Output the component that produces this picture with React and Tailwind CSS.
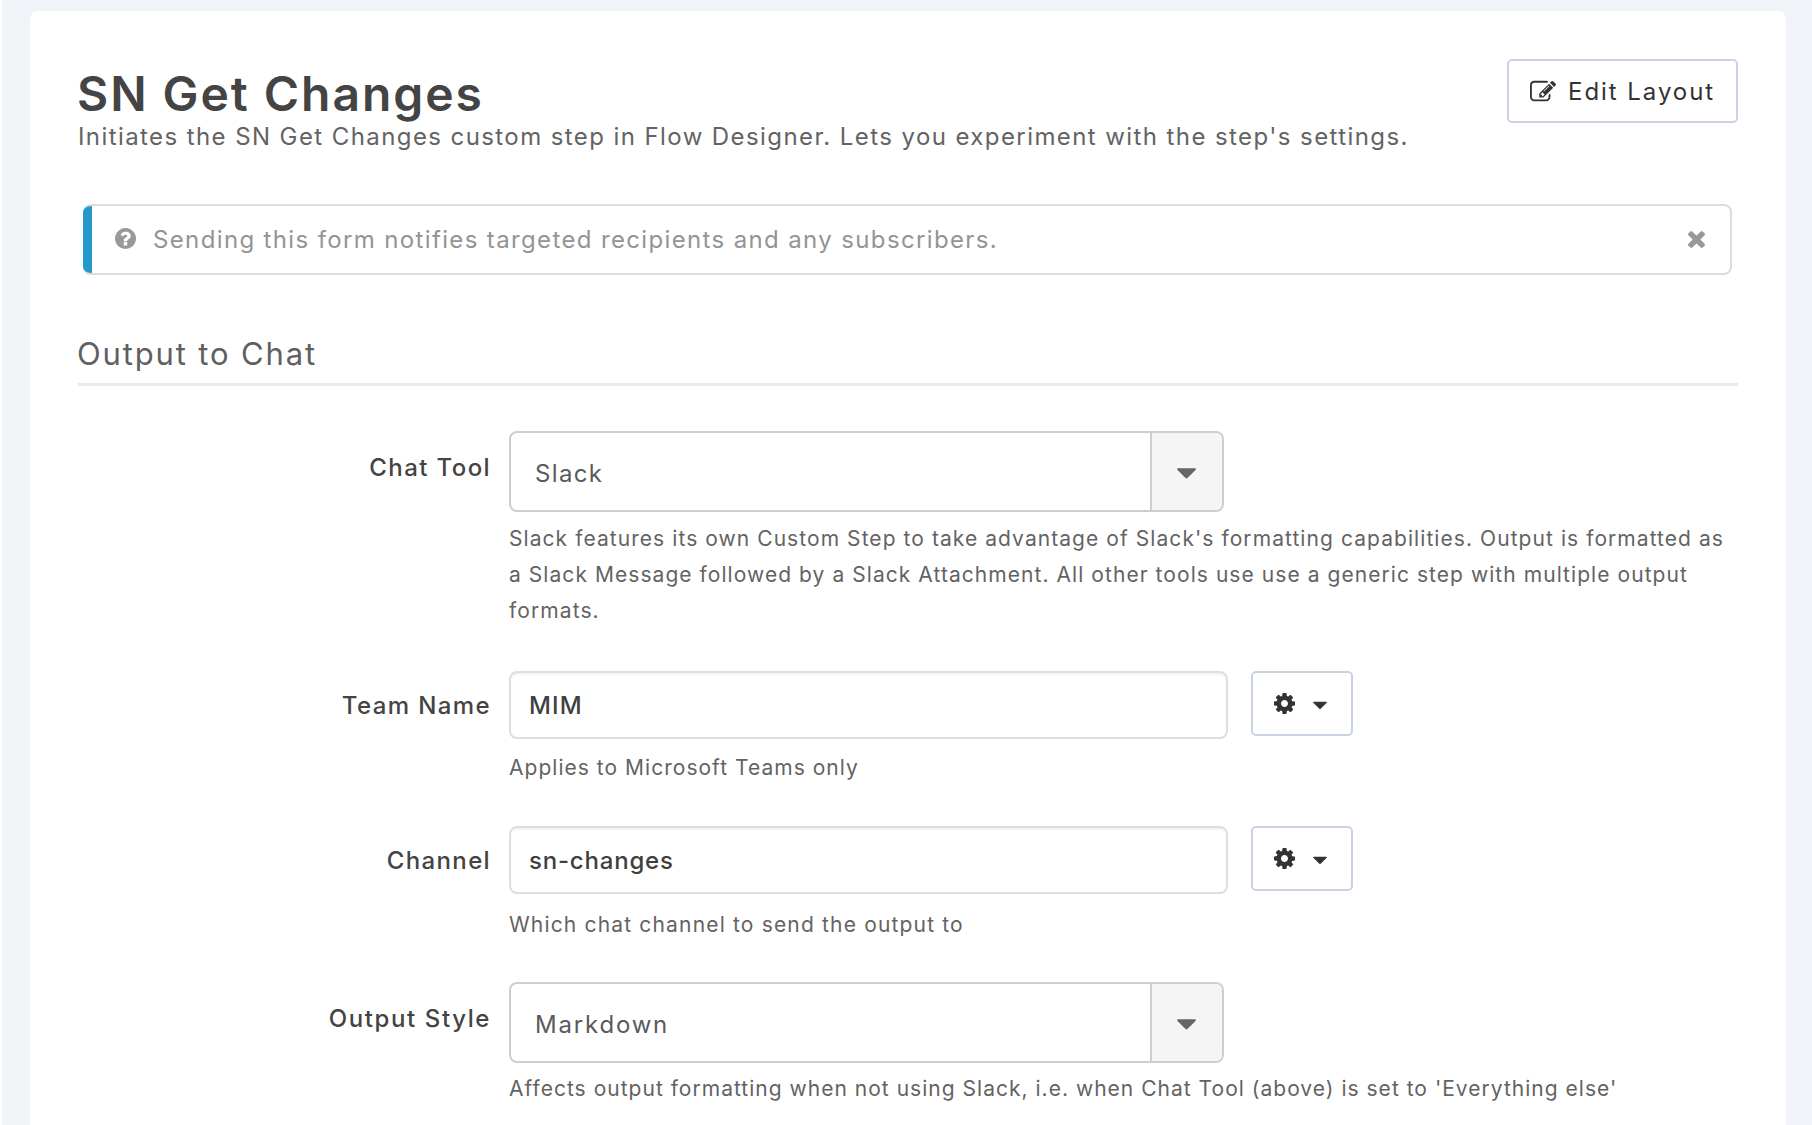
import React from "react";

function PencilSquareIcon({ className }) {
  return (
    <svg viewBox="0 0 1792 1792" fill="currentColor" className={className}>
      <path d="M888 1184l116-116-152-152-116 116v56h96v96h56zm440-720q-16-16-33 1l-350 350q-17 17-1 33t33-1l350-350q17-17 1-33zm80 594v190q0 119-84.500 203.500t-203.500 84.500h-832q-119 0-203.500-84.500t-84.500-203.500v-832q0-119 84.500-203.500t203.500-84.500h832q63 0 117 25 15 7 18 23 3 17-9 29l-49 49q-14 14-32 8-23-6-45-6h-832q-66 0-113 47t-47 113v832q0 66 47 113t113 47h832q66 0 113-47t47-113v-126q0-13 9-22l64-64q15-15 35-7t20 29zm-96-738l288 288-672 672h-288v-288zm444 132l-92 92-288-288 92-92q28-28 68-28t68 28l152 152q28 28 28 68t-28 68z" />
    </svg>
  );
}

function HelpIcon({ className }) {
  return (
    <svg viewBox="0 0 1536 1536" fill="currentColor" className={className}>
      <path d="M896 1248v-192q0-14-9-23t-23-9H672q-14 0-23 9t-9 23v192q0 14 9 23t23 9h192q14 0 23-9t9-23zm256-672q0-88-55.500-163T958 297t-170-41q-243 0-371 213-15 24 8 42l132 100q7 6 19 6 16 0 25-12 53-68 86-92 34-24 86-24 48 0 85.500 26t37.500 59q0 38-20 61t-68 45q-63 28-115.500 86.500T640 892v36q0 14 9 23t23 9h192q14 0 23-9t9-23q0-19 21.500-49.500T972 829q32-18 49-28.500t46-35 44.500-48 28-60.500 12.500-81zm384 192q0 209-103 385.500T1153.500 1433 768 1536t-385.500-103T103 1153.500 0 768t103-385.500T382.500 103 768 0t385.500 103T1433 382.500 1536 768z" />
    </svg>
  );
}

function CloseIcon({ className }) {
  return (
    <svg viewBox="110 302 1188 1188" fill="currentColor" className={className}>
      <path d="M1298 1322q0 40-28 68l-136 136q-28 28-68 28t-68-28l-294-294-294 294q-28 28-68 28t-68-28l-136-136q-28-28-28-68t28-68l294-294-294-294q-28-28-28-68t28-68l136-136q28-28 68-28t68 28l294 294 294-294q28-28 68-28t68 28l136 136q28 28 28 68t-28 68l-294 294 294 294q28 28 28 68z" transform="translate(0 -64)" />
    </svg>
  );
}

function GearIcon({ className }) {
  return (
    <svg viewBox="0 0 1536 1536" fill="currentColor" className={className}>
      <path d="M1024 768q0-106-75-181t-181-75-181 75-75 181 75 181 181 75 181-75 75-181zm512-109v222q0 12-8 23t-20 13l-185 28q-19 54-39 91 35 50 107 138 10 12 10 25t-9 23q-27 37-99 108t-94 71q-12 0-26-9l-138-108q-44 23-91 38-16 136-29 186-7 28-36 28H657q-14 0-24.500-8.500T621 1506l-28-184q-49-16-90-37l-141 107q-10 9-25 9-14 0-25-11-126-114-165-168-7-10-7-23 0-12 8-23 15-21 51-66.500t54-70.500q-27-50-41-99L29 913q-13-2-21-12.500T0 877V655q0-12 8-23t19-13l186-28q14-46 39-92-40-57-107-138-10-12-10-24 0-10 9-23 26-36 98.500-107.500T337 135q13 0 26 10l138 107q44-23 91-38 16-136 29-186 7-28 36-28h222q14 0 24.500 8.500T915 30l28 184q49 16 90 37l142-107q9-9 24-9 13 0 25 10 129 119 165 170 7 8 7 22 0 12-8 23-15 21-51 66.500t-54 70.500q26 50 41 98l183 28q13 2 21 12.500t8 23.500z" />
    </svg>
  );
}

function Caret({ className }) {
  return (
    <svg viewBox="0 0 20 11" fill="currentColor" className={className}>
      <path d="M1.200 0h17.600q1.800.3.700 1.700L11 10.300q-1 .9-2 0L.5 1.700Q-.6.3 1.200 0z" />
    </svg>
  );
}

function Row({ label, labelClass, className, children }) {
  return (
    <div className={`grid grid-cols-[413px_1fr] gap-x-[18px] ${className}`}>
      <label className={`text-right text-[24px] leading-6 font-[450] text-[#444] ${labelClass}`}>{label}</label>
      <div>{children}</div>
    </div>
  );
}

function SelectBox({ children, textClass }) {
  return (
    <div className="flex h-[81px] w-[715px] overflow-hidden rounded-lg border-2 border-[#cecece]">
      <div className={`flex flex-1 items-center pl-[24px] pt-[4px] text-[24px] text-[#5a5a5a] ${textClass}`}>{children}</div>
      <div className="flex w-[72px] items-center justify-center border-l-2 border-[#cecece] bg-[#f5f5f5]">
        <Caret className="mt-[3px] mr-px h-[11px] w-[19px] text-[#666]" />
      </div>
    </div>
  );
}

function TextField({ value, textClass }) {
  return (
    <div className="flex items-start gap-[23px]">
      <div className={`flex h-[68px] w-[719px] items-center rounded-lg border-2 border-[#dedede] pt-[2px] pl-[18px] text-[24px] font-[450] text-[#3f3f3f] shadow-[inset_0_2px_2px_rgba(0,0,0,0.05)] ${textClass}`}>
        {value}
      </div>
      <button className="flex h-[65px] w-[102px] items-center rounded-[5px] border-2 border-[#c9d3e5] pl-[21px] text-[#333]">
        <GearIcon className="h-[21px] w-[21px]" />
        <Caret className="mt-1 ml-[18px] h-[9px] w-[14px]" />
      </button>
    </div>
  );
}

function Help({ className, children }) {
  return <p className={`text-[21px] leading-9 whitespace-nowrap text-[#636363] ${className}`}>{children}</p>;
}

export default function App() {
  return (
    <div className="h-[1125px] overflow-hidden border-l-2 border-white bg-[#f0f4f8] pt-[11px] pl-[28px] font-[Inter,sans-serif]">
      <main className="h-[1200px] w-[1756px] rounded-t-lg bg-white px-12 pt-12">
        <header className="flex h-[95px] items-start justify-between">
          <div className="pt-[11px]">
            <h1 className="-ml-px text-[48px] leading-[48px] font-semibold tracking-[1.95px] text-[#444]">SN Get Changes</h1>
            <p className="pt-px text-[24px] leading-9 tracking-[1.41px] whitespace-nowrap text-[#636363]">
              Initiates the SN Get Changes custom step in Flow Designer. Lets you experiment with the step's settings.
            </p>
          </div>
          <button className="flex h-[64px] w-[231px] items-center rounded-[5px] border-2 border-[#c9d3e5] pt-px pl-[21px] text-[24px] tracking-[1.95px] whitespace-nowrap text-[#333]">
            <PencilSquareIcon className="mr-[12px] h-[26px] w-[26px]" />
            Edit Layout
          </button>
        </header>

        <div className="mt-[50px] mr-[6px] ml-[5px] flex h-[71px] overflow-hidden rounded-lg border-2 border-l-0 border-[#dcdcdc] text-[#999]">
          <div className="-my-0.5 w-[9px] bg-[#2399cc]" />
          <div className="flex flex-1 items-center pr-[25px] pl-[23px]">
            <HelpIcon className="mb-0.5 h-[21px] w-[21px]" />
            <span className="ml-[17px] flex-1 pt-px text-[24px] tracking-[1.36px] text-[#949494]">
              Sending this form notifies targeted recipients and any subscribers.
            </span>
            <CloseIcon className="h-[17px] w-[17px]" />
          </div>
        </div>

        <h2 className="mt-[61px] border-b-[3px] border-[#eaeaea] pb-[11px] text-[31px] leading-9 tracking-[1.85px] text-[#606060]">
          <span className="-ml-px">Output to Chat</span>
        </h2>

        <Row label="Chat Tool" className="mt-[45px]" labelClass="pt-[25px] tracking-[1.4px]">
          <SelectBox textClass="tracking-[1.35px]">Slack</SelectBox>
          <Help className="mt-[9px]">
            <span className="block tracking-[1.066px]">Slack features its own Custom Step to take advantage of Slack's formatting capabilities. Output is formatted as</span>
            <span className="block tracking-[1.058px]">a Slack Message followed by a Slack Attachment. All other tools use use a generic step with multiple output</span>
            <span className="block tracking-[1.1px]">formats.</span>
          </Help>
        </Row>

        <Row label="Team Name" className="mt-[42px]" labelClass="pt-[23px] tracking-[1.4px]">
          <TextField value="MIM" textClass="tracking-[1.2px]" />
          <Help className="mt-[11px] tracking-[1.026px]">Applies to Microsoft Teams only</Help>
        </Row>

        <Row label="Channel" className="mt-[40px]" labelClass="pt-[23px] tracking-[1.35px]">
          <TextField value="sn-changes" textClass="tracking-[0.8px]" />
          <Help className="mt-[13px] tracking-[1.17px]">Which chat channel to send the output to</Help>
        </Row>

        <Row label="Output Style" className="mt-[39px]" labelClass="pt-[25px] tracking-[1.6px]">
          <SelectBox textClass="tracking-[1.8px]">Markdown</SelectBox>
          <Help className="mt-[8px] tracking-[1.018px]">
            Affects output formatting when not using Slack, i.e. when Chat Tool (above) is set to 'Everything else'
          </Help>
        </Row>
      </main>
    </div>
  );
}
